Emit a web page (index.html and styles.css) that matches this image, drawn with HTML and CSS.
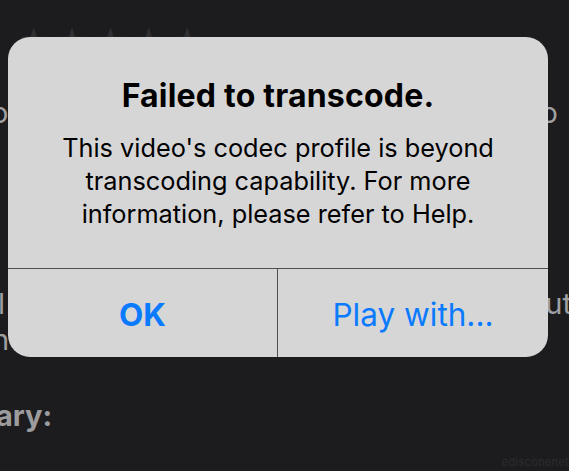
FILE: index.html
```html
<!DOCTYPE html>
<html>
<head>
<meta charset="utf-8">
<link rel="stylesheet" href="styles.css">
</head>
<body>
<div class="page">
  <div class="stars">
    <span class="star">★</span><span class="star">★</span><span class="star">★</span><span class="star">★</span><span class="star">★</span>
  </div>
  <div class="row row-o"><span class="edge-left">o</span><span class="edge-right">o</span></div>
  <div class="row row-l"><span class="edge-left">l</span><span class="edge-right">ut</span></div>
  <div class="row row-n"><span class="edge-left">n</span></div>
  <div class="summary">ary:</div>
  <div class="watermark">edisconenet</div>
</div>

<div class="alert">
  <div class="alert-body">
    <div class="alert-title">Failed to transcode.</div>
    <div class="alert-msg">This video's codec profile is beyond transcoding capability. For more information, please refer to Help.</div>
  </div>
  <div class="alert-actions">
    <div class="btn btn-ok">OK</div>
    <div class="btn btn-play">Play with...</div>
  </div>
</div>
</body>
</html>
```

FILE: styles.css
```css
html, body {
  margin: 0;
  padding: 0;
  background: #1c1c1e;
  width: 569px;
  height: 471px;
  overflow: hidden;
  font-family: "Inter", "Roboto", "Liberation Sans", sans-serif;
}

.page {
  position: relative;
  height: 471px;
  color: #8e8e90;
}

.stars {
  display: flex;
  gap: 7px;
  padding: 26px 0 0 18px;
  height: 40px;
  box-sizing: border-box;
  overflow: hidden;
}

.star {
  font-size: 30px;
  color: #302f32;
  line-height: 30px;
}

.row {
  display: flex;
  justify-content: space-between;
  font-size: 29px;
  line-height: 32px;
  color: #a0a0a2;
}

.row-o {
  margin-top: 57px;
}

.edge-left {
  margin-left: -9px;
}

.row-o .edge-right {
  margin-left: auto;
  padding-right: 11px;
}

.row-l {
  margin-top: 159px;
}

.row-l .edge-left {
  margin-left: -2px;
}

.row-l .edge-right {
  margin-right: -3px;
}

.row-n {
  margin-top: 4px;
}

.row-n .edge-left {
  margin-left: -8px;
}

.summary {
  margin-top: 42px;
  margin-left: -4px;
  font-size: 29px;
  font-weight: 700;
  color: #9c9c9e;
}

.watermark {
  position: absolute;
  right: 0;
  bottom: 2px;
  font-size: 11px;
  letter-spacing: 0.3px;
  color: #2c2c2e;
}

.alert {
  position: absolute;
  left: 8px;
  top: 37px;
  width: 540px;
  height: 320px;
  background: #d6d6d7;
  border-radius: 22px;
  display: flex;
  flex-direction: column;
  overflow: hidden;
}

.alert-body {
  height: 232px;
  box-sizing: border-box;
  padding: 40px 20px 0;
  text-align: center;
  color: #000;
  border-bottom: 1px solid #4f4f50;
}

.alert-title {
  font-size: 32px;
  font-weight: 700;
  line-height: 38px;
  letter-spacing: 0.2px;
}

.alert-msg {
  margin-top: 16px;
  font-size: 25.3px;
  line-height: 33px;
  padding: 0 20px;
}

.alert-actions {
  flex: 1;
  display: grid;
  grid-template-columns: 270px 1fr;
}

.btn {
  display: flex;
  align-items: center;
  justify-content: center;
  font-size: 31.5px;
  color: #0a7aff;
  padding-top: 3px;
}

.btn-ok {
  font-weight: 700;
  border-right: 1px solid #4f4f50;
}
```
